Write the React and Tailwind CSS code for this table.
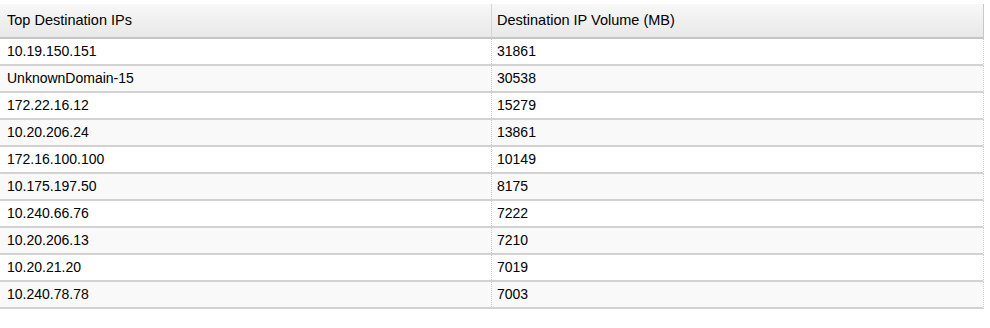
const rows = [
  ["10.19.150.151", "31861"],
  ["UnknownDomain-15", "30538"],
  ["172.22.16.12", "15279"],
  ["10.20.206.24", "13861"],
  ["172.16.100.100", "10149"],
  ["10.175.197.50", "8175"],
  ["10.240.66.76", "7222"],
  ["10.20.206.13", "7210"],
  ["10.20.21.20", "7019"],
  ["10.240.78.78", "7003"],
];

export default function App() {
  return (
    <div
      className="w-[990px] h-[328px] bg-white pt-[4px] text-black"
      style={{ fontFamily: '"Liberation Sans", Arial, sans-serif' }}
    >
      <div className="w-[984px]">
        {/* Header */}
        <div className="flex h-[35px] bg-gradient-to-b from-[#f8f8f8] to-[#e8e8e8] border-b-2 border-[#c6c6c6] border-r border-r-[#c8c8c8] text-[14.5px]">
          <div className="w-[492px] flex items-center pl-[7px] border-r border-[#d6d6d6]">
            Top Destination IPs
          </div>
          <div className="flex-1 flex items-center pl-[5px]">
            Destination IP Volume (MB)
          </div>
        </div>

        {/* Rows */}
        {rows.map(([ip, vol], i) => (
          <div
            key={ip}
            className={`flex h-[27px] border-b-2 border-[#d2d2d2] border-r border-r-[#cfcfcf] text-[14px] ${
              i % 2 === 0 ? "bg-white" : "bg-[#f9f9f9]"
            }`}
            style={{ borderBottomStyle: "solid", borderRightStyle: "dotted" }}
          >
            <div className="w-[492px] flex items-center pl-[7px] border-r border-dotted border-[#c4c4c4]">
              {ip}
            </div>
            <div className="flex-1 flex items-center pl-[5px]">{vol}</div>
          </div>
        ))}
      </div>
    </div>
  );
}
